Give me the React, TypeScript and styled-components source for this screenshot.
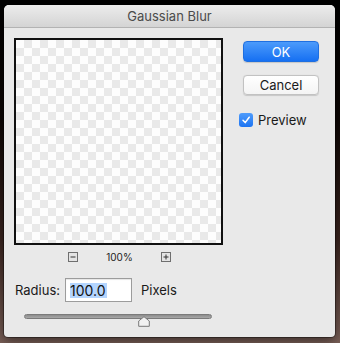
import React from 'react'
import styled, { createGlobalStyle } from 'styled-components'

const GlobalStyle = createGlobalStyle`
	html, body {
		margin: 0;
		padding: 0;
		height: 343px;
		overflow: hidden;
	}

	body {
		background: linear-gradient(180deg, #000 0%, #0d0604 35%, #3b2520 70%, #7a6058 100%);
		font-family: Inter, 'Liberation Sans', sans-serif;
	}
`

const Window = styled.div`
	width: 331px;
	height: 332px;
	margin: 5px 0 0 4px;
	background: #e9e9e9;
	border-radius: 5px 5px 4px 4px;
	overflow: hidden;
	box-shadow: 0 0 0 1px rgba(0, 0, 0, 0.35), 0 4px 12px rgba(0, 0, 0, 0.5);
`

const TitleBar = styled.div`
	height: 22px;
	display: flex;
	align-items: center;
	justify-content: center;
	background: linear-gradient(180deg, #ececec, #d4d4d4);
	border-bottom: 1px solid #b3b3b3;
	font-size: 13px;
	color: #4b4b4b;
`

const Body = styled.div`
	padding: 10px 0 0 10px;
`

const TopRow = styled.div`
	display: flex;
	gap: 16px;
`

const LeftColumn = styled.div`
	display: flex;
	flex-direction: column;
	width: 209px;
`

const PreviewBox = styled.div`
	box-sizing: border-box;
	width: 209px;
	height: 207px;
	border: 2px solid #111;
	background: repeating-conic-gradient(#e9e9e9 0 25%, #fdfdfd 0 50%) 0 0 / 16px 16px;
`

const ZoomRow = styled.div`
	display: flex;
	align-items: center;
	justify-content: center;
	gap: 28px;
	height: 10px;
	margin-top: 7px;
	padding-left: 2px;
	font-size: 10px;
	color: #222;
`

const ZoomButton = styled.div`
	width: 10px;
	height: 10px;
	display: flex;
	align-items: center;
	justify-content: center;
`

const RightColumn = styled.div`
	display: flex;
	flex-direction: column;
	padding-top: 3px;
`

const Button = styled.button<{ $primary?: boolean }>`
	box-sizing: border-box;
	width: 76px;
	height: ${({ $primary }) => ($primary ? '21px' : '20px')};
	margin-left: 4px;
	padding: 0;
	border-radius: 4px;
	font-family: inherit;
	font-size: 13px;
	color: ${({ $primary }) => ($primary ? '#fff' : '#1a1a1a')};
	border: 1px solid ${({ $primary }) => ($primary ? '#1f6fe0' : '#c2c2c2')};
	background: ${({ $primary }) =>
		$primary ? 'linear-gradient(180deg, #4c9bfb, #1670f2)' : 'linear-gradient(180deg, #ffffff, #f4f4f4)'};
	box-shadow: 0 0.5px 1px rgba(0, 0, 0, 0.15);

	& + & {
		margin-top: 13px;
	}
`

const CheckRow = styled.label`
	display: flex;
	align-items: center;
	gap: 5px;
	margin-top: 17px;
	font-size: 13px;
	color: #1a1a1a;
`

const CheckBox = styled.span`
	width: 14px;
	height: 14px;
	border-radius: 3px;
	background: linear-gradient(180deg, #4f9cfb, #1d74f2);
	display: flex;
	align-items: center;
	justify-content: center;
`

const RadiusRow = styled.div`
	display: flex;
	align-items: center;
	margin-top: 16px;
	padding-left: 1px;
	font-size: 13px;
	color: #1a1a1a;
`

const RadiusInput = styled.div`
	box-sizing: border-box;
	width: 67px;
	height: 24px;
	margin: 0 9px 0 5px;
	padding: 0 0 0 4px;
	display: flex;
	align-items: center;
	background: #fff;
	border: 1px solid #9c9c9c;
	box-shadow: inset 0 1px 1px rgba(0, 0, 0, 0.1);
	font-size: 14px;
	color: #111;
`

const Selection = styled.span`
	background: #b4d5fe;
	line-height: 15px;
	padding-right: 1px;
`

const SliderRow = styled.div`
	position: relative;
	width: 188px;
	height: 14px;
	margin: 12px 0 0 10px;
`

const Track = styled.div`
	box-sizing: border-box;
	height: 5px;
	border-radius: 3px;
	border: 1px solid #7b7b7b;
	background: linear-gradient(180deg, #8c8c8c, #a9a9a9);
`

const Thumb = styled.svg`
	position: absolute;
	top: 2px;
	margin-left: -6px;
`

const MinusIcon = () => (
	<svg width="10" height="10" viewBox="0 0 10 10">
		<rect x="0.5" y="0.5" width="9" height="9" fill="#e4e4e4" stroke="#6f6f6f" />
		<path d="M2.5 5h5" stroke="#333" strokeWidth="1" />
	</svg>
)

const PlusIcon = () => (
	<svg width="10" height="10" viewBox="0 0 10 10">
		<rect x="0.5" y="0.5" width="9" height="9" fill="#e4e4e4" stroke="#6f6f6f" />
		<path d="M2.5 5h5M5 2.5v5" stroke="#333" strokeWidth="1" />
	</svg>
)

const App = () => {
	const radius = 100
	const sliderPos = 64

	return (
		<>
			<GlobalStyle />
			<Window>
				<TitleBar>Gaussian Blur</TitleBar>
				<Body>
					<TopRow>
						<LeftColumn>
							<PreviewBox />
							<ZoomRow>
								<ZoomButton>
									<MinusIcon />
								</ZoomButton>
								<span>100%</span>
								<ZoomButton>
									<PlusIcon />
								</ZoomButton>
							</ZoomRow>
						</LeftColumn>
						<RightColumn>
							<Button $primary>OK</Button>
							<Button>Cancel</Button>
							<CheckRow>
								<CheckBox>
									<svg width="10" height="10" viewBox="0 0 10 10">
										<path d="M2 5.3 L4.2 7.6 L8.2 2.2" fill="none" stroke="#fff" strokeWidth="1.5" strokeLinecap="round" strokeLinejoin="round" />
									</svg>
								</CheckBox>
								Preview
							</CheckRow>
						</RightColumn>
					</TopRow>
					<RadiusRow>
						Radius:
						<RadiusInput>
							<Selection>{radius.toFixed(1)}</Selection>
						</RadiusInput>
						Pixels
					</RadiusRow>
					<SliderRow>
						<Track />
						<Thumb width="12" height="11" viewBox="0 0 12 11" style={{ left: `${sliderPos}%` }}>
							<path d="M6 0.7 L11.3 5 L11.3 10.3 L0.7 10.3 L0.7 5 Z" fill="#f2f2f2" stroke="#7a7a7a" strokeWidth="1" strokeLinejoin="round" />
						</Thumb>
					</SliderRow>
				</Body>
			</Window>
		</>
	)
}

export default App
